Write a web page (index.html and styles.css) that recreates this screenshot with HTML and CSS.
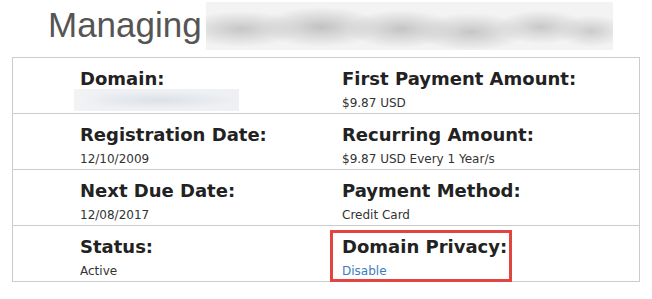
FILE: index.html
```html
<!DOCTYPE html>
<html lang="en">

<head>
    <meta charset="UTF-8">
    <meta name="viewport" content="width=device-width, initial-scale=1.0">
    <title>Managing domain</title>
    <link rel="stylesheet" href="styles.css">
</head>

<body>
    <!-- 标题 -->
    <div class="header">
        <h1 class="title">Managing</h1>
        <div class="blur-name"></div>
    </div>
    <!-- 信息表 -->
    <div class="info">
        <div class="row">
            <div class="cell left">
                <div class="label">Domain:</div>
                <div class="blur-domain"></div>
            </div>
            <div class="cell right">
                <div class="label">First Payment Amount:</div>
                <div class="value">$9.87 USD</div>
            </div>
        </div>
        <div class="row">
            <div class="cell left">
                <div class="label">Registration Date:</div>
                <div class="value">12/10/2009</div>
            </div>
            <div class="cell right">
                <div class="label">Recurring Amount:</div>
                <div class="value">$9.87 USD Every 1 Year/s</div>
            </div>
        </div>
        <div class="row">
            <div class="cell left">
                <div class="label">Next Due Date:</div>
                <div class="value">12/08/2017</div>
            </div>
            <div class="cell right">
                <div class="label">Payment Method:</div>
                <div class="value">Credit Card</div>
            </div>
        </div>
        <div class="row">
            <div class="cell left">
                <div class="label">Status:</div>
                <div class="value">Active</div>
            </div>
            <div class="cell right">
                <div class="label">Domain Privacy:</div>
                <div class="value"><a href="javascript:;">Disable</a></div>
                <!-- 红色标注框 -->
                <div class="highlight"></div>
            </div>
        </div>
    </div>
</body>

</html>
```

FILE: styles.css
```css
* {
    margin: 0;
    padding: 0;
}

body {
    background-color: #fff;
    font-family: "DejaVu Sans", Verdana, sans-serif;
}

/* 标题 */
.header {
    display: flex;
    align-items: flex-start;
    height: 57px;
    padding-left: 48px;
}

.title {
    font-family: "Liberation Sans", Arial, sans-serif;
    font-size: 35px;
    font-weight: normal;
    line-height: 50px;
    color: #555;
}

/* 打码的域名 */
.blur-name {
    width: 407px;
    height: 48px;
    margin-top: 2px;
    margin-left: 4px;
    background-color: #f3f3f3;
    background-image:
        radial-gradient(ellipse 60px 18px at 35px 27px, #c6c6c6, rgba(198, 198, 198, 0)),
        radial-gradient(ellipse 60px 20px at 115px 25px, #c2c2c2, rgba(194, 194, 194, 0)),
        radial-gradient(ellipse 55px 19px at 195px 27px, #c4c4c4, rgba(196, 196, 196, 0)),
        radial-gradient(ellipse 55px 19px at 265px 30px, #c6c6c6, rgba(198, 198, 198, 0)),
        radial-gradient(ellipse 45px 17px at 335px 25px, #c8c8c8, rgba(200, 200, 200, 0)),
        radial-gradient(ellipse 35px 16px at 385px 29px, #cbcbcb, rgba(203, 203, 203, 0));
}

/* 表格 */
.info {
    margin: 0 12px;
    border: 1px solid #ccc;
    border-bottom: none;
}

.row {
    display: grid;
    grid-template-columns: 313px 1fr;
    height: 56px;
    box-sizing: border-box;
    border-bottom: 1px solid #ccc;
}

.cell {
    padding-top: 7px;
    position: relative;
}

.left {
    padding-left: 67px;
}

.right {
    padding-left: 16px;
}

.label {
    font-size: 18px;
    font-weight: bold;
    line-height: 28px;
    color: #222;
}

.value {
    font-size: 12px;
    line-height: 20px;
    color: #333;
}

.value a {
    color: #3a7dbd;
    text-decoration: none;
}

/* 打码的域名值 */
.blur-domain {
    width: 165px;
    height: 22px;
    margin: -4px 0 0 -6px;
    background-color: #eef0f3;
    background-image:
        linear-gradient(to right, #f2f3f5, rgba(242, 243, 245, 0) 30px),
        radial-gradient(ellipse 80px 9px at 85px 11px, #dde1e7, rgba(221, 225, 231, 0));
}

/* 红框 */
.highlight {
    position: absolute;
    left: 4px;
    top: 4px;
    width: 176px;
    height: 46px;
    border: 3px solid #e2443f;
}
```
